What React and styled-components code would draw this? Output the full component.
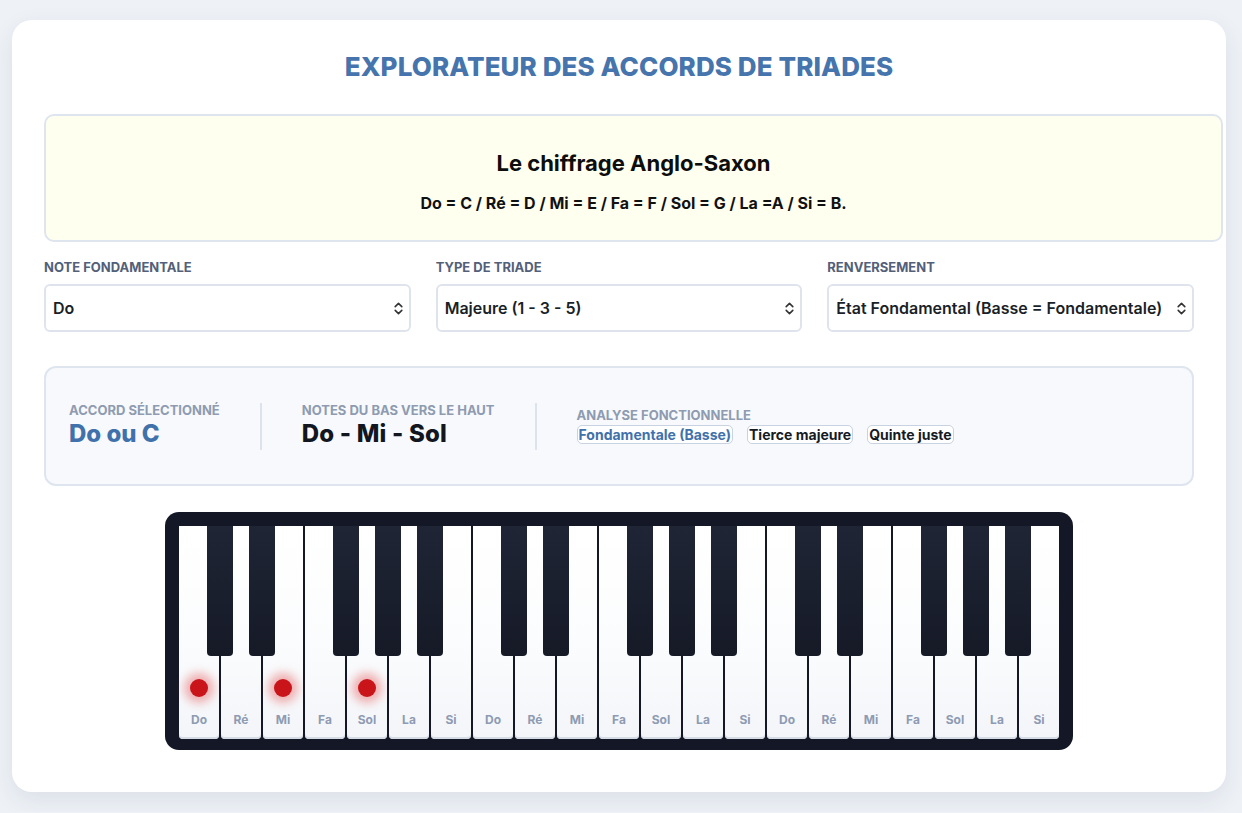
import React from 'react';
import styled, { createGlobalStyle } from 'styled-components';

const GlobalStyle = createGlobalStyle`
    html, body {
        margin: 0;
        padding: 0;
        background: #eef2f7;
        font-family: Inter, "Noto Sans", "Liberation Sans", sans-serif;
    }
`;

const WHITE_NOTES = ['Do', 'Ré', 'Mi', 'Fa', 'Sol', 'La', 'Si'];
const HAS_SHARP = { Do: true, Ré: true, Fa: true, Sol: true, La: true };
const ACTIVE = [0, 2, 4];

const ChevronUpDown = () => (
    <svg width="9" height="13" viewBox="0 0 9 13" fill="none" stroke="#333" strokeWidth="1.6" strokeLinecap="round" strokeLinejoin="round">
        <polyline points="1.2,4.6 4.5,1.4 7.8,4.6" />
        <polyline points="1.2,8.4 4.5,11.6 7.8,8.4" />
    </svg>
);

const App = () => {
    const keys = [];
    for (let o = 0; o < 3; o++) {
        WHITE_NOTES.forEach((n, i) => keys.push({ name: n, index: o * 7 + i }));
    }

    return (
        <>
            <GlobalStyle />
            <Card>
                <Title>Explorateur des accords de triades</Title>

                <InfoNotice>
                    <h2>Le chiffrage Anglo-Saxon</h2>
                    <p>Do = C / Ré = D / Mi = E / Fa = F / Sol = G / La =A / Si = B.</p>
                </InfoNotice>

                <Controls>
                    <Field>
                        <FieldLabel>Note fondamentale</FieldLabel>
                        <SelectWrap>
                            <Select defaultValue="Do">
                                {WHITE_NOTES.map((n) => (
                                    <option key={n}>{n}</option>
                                ))}
                            </Select>
                            <ChevronUpDown />
                        </SelectWrap>
                    </Field>
                    <Field>
                        <FieldLabel>Type de triade</FieldLabel>
                        <SelectWrap>
                            <Select defaultValue="maj">
                                <option value="maj">Majeure (1 - 3 - 5)</option>
                                <option value="min">Mineure (1 - b3 - 5)</option>
                            </Select>
                            <ChevronUpDown />
                        </SelectWrap>
                    </Field>
                    <Field>
                        <FieldLabel>Renversement</FieldLabel>
                        <SelectWrap>
                            <Select defaultValue="0">
                                <option value="0">État Fondamental (Basse = Fondamentale)</option>
                                <option value="1">1er renversement</option>
                            </Select>
                            <ChevronUpDown />
                        </SelectWrap>
                    </Field>
                </Controls>

                <Summary>
                    <SummaryItem>
                        <SummaryLabel>Accord sélectionné</SummaryLabel>
                        <ChordName>Do ou C</ChordName>
                    </SummaryItem>
                    <Divider />
                    <SummaryItem>
                        <SummaryLabel>Notes du bas vers le haut</SummaryLabel>
                        <NotesValue>Do - Mi - Sol</NotesValue>
                    </SummaryItem>
                    <Divider />
                    <SummaryItem>
                        <SummaryLabel>Analyse fonctionnelle</SummaryLabel>
                        <Tags>
                            <Tag $root>Fondamentale (Basse)</Tag>
                            <Tag>Tierce majeure</Tag>
                            <Tag>Quinte juste</Tag>
                        </Tags>
                    </SummaryItem>
                </Summary>

                <PianoRow>
                    <Piano>
                        {keys.map((k) => (
                            <WhiteKey key={k.index}>
                                {HAS_SHARP[k.name] && <BlackKey />}
                                {ACTIVE.includes(k.index) && <Dot />}
                                <KeyLabel>{k.name}</KeyLabel>
                            </WhiteKey>
                        ))}
                    </Piano>
                </PianoRow>
            </Card>
        </>
    );
};

export default App;

const Card = styled.main`
    margin: 20px 16px 20px 12px;
    background: #ffffff;
    border-radius: 20px;
    box-shadow: 0 8px 24px rgba(30, 45, 70, 0.09);
    padding: 31px 32px 42px 32px;
`;

const Title = styled.h1`
    margin: 0 0 31px 0;
    text-align: center;
    text-transform: uppercase;
    color: #4674ad;
    font-size: 26px;
    line-height: 32px;
    font-weight: 800;
    letter-spacing: 0.1px;
`;

const InfoNotice = styled.section`
    margin-right: -29px;
    height: 128px;
    box-sizing: border-box;
    background: #fffff0;
    border: 2px solid #dfe5ee;
    border-radius: 10px;
    text-align: center;
    padding-top: 33px;

    h2 {
        margin: 0 0 17px 0;
        font-size: 22px;
        line-height: 28px;
        font-weight: 700;
        color: #0d0d0d;
    }

    p {
        margin: 0;
        font-size: 16px;
        line-height: 19px;
        font-weight: 700;
        color: #111;
    }
`;

const Controls = styled.div`
    display: grid;
    grid-template-columns: repeat(3, 1fr);
    gap: 25px;
    margin-top: 18px;
`;

const Field = styled.div`
    display: flex;
    flex-direction: column;
`;

const FieldLabel = styled.label`
    font-size: 13px;
    line-height: 15px;
    font-weight: 700;
    text-transform: uppercase;
    color: #526079;
    margin-bottom: 9px;
`;

const SelectWrap = styled.div`
    position: relative;

    svg {
        position: absolute;
        right: 8px;
        top: 18px;
        pointer-events: none;
    }
`;

const Select = styled.select`
    appearance: none;
    width: 100%;
    height: 48px;
    box-sizing: border-box;
    border: 2px solid #dfe4ec;
    border-radius: 6px;
    background: #ffffff;
    padding: 0 24px 0 7px;
    font-family: inherit;
    font-size: 16px;
    font-weight: 600;
    color: #1b1f27;
    outline: none;
`;

const Summary = styled.section`
    margin-top: 34px;
    height: 120px;
    box-sizing: border-box;
    background: #f7f9fc;
    border: 2px solid #dfe5ee;
    border-radius: 12px;
    padding: 0 23px;
    display: flex;
    align-items: center;
    gap: 40px;
`;

const SummaryItem = styled.div`
    display: flex;
    flex-direction: column;
    gap: 1px;
`;

const SummaryLabel = styled.span`
    font-size: 13px;
    line-height: 15px;
    font-weight: 700;
    text-transform: uppercase;
    color: #8e9bb0;
`;

const ChordName = styled.span`
    font-size: 24px;
    line-height: 30px;
    font-weight: 800;
    color: #4171ab;
`;

const NotesValue = styled.span`
    font-size: 24px;
    line-height: 30px;
    font-weight: 800;
    color: #121621;
    letter-spacing: 0.2px;
`;

const Divider = styled.div`
    width: 2px;
    height: 47px;
    background: #dde3ec;
`;

const Tags = styled.div`
    display: flex;
    gap: 14px;
    margin-top: 1px;
`;

const Tag = styled.span`
    background: #ffffff;
    border: 1px solid #c9d2e0;
    border-radius: 5px;
    padding: 0 1px;
    font-size: 14px;
    line-height: 17px;
    font-weight: 700;
    color: ${(p) => (p.$root ? '#4171ab' : '#161a24')};
`;

const PianoRow = styled.div`
    display: flex;
    justify-content: center;
    margin-top: 26px;
`;

const Piano = styled.div`
    display: flex;
    gap: 2px;
    padding: 14px 14px 11px 14px;
    background: #141826;
    border-radius: 14px;
`;

const WhiteKey = styled.div`
    position: relative;
    width: 40px;
    height: 213px;
    border-radius: 0 0 4px 4px;
    background: linear-gradient(180deg, #ffffff 0%, #fbfcfd 55%, #f3f5f9 100%);
    box-shadow: inset 0 -2px 0 #d6dce6;
    display: flex;
    flex-direction: column;
    align-items: center;
    justify-content: flex-end;
`;

const BlackKey = styled.div`
    position: absolute;
    top: 0;
    right: -14px;
    width: 26px;
    height: 130px;
    border-radius: 0 0 4px 4px;
    background: linear-gradient(180deg, #1f2535 0%, #161a27 100%);
    z-index: 2;
`;

const Dot = styled.span`
    position: absolute;
    top: 153px;
    left: 11px;
    width: 18px;
    height: 18px;
    border-radius: 50%;
    background: #c9141a;
    box-shadow: 0 0 10px 6px rgba(225, 45, 45, 0.36);
`;

const KeyLabel = styled.span`
    font-size: 12px;
    line-height: 14px;
    font-weight: 700;
    color: #8e9bb2;
    margin-bottom: 12px;
`;
